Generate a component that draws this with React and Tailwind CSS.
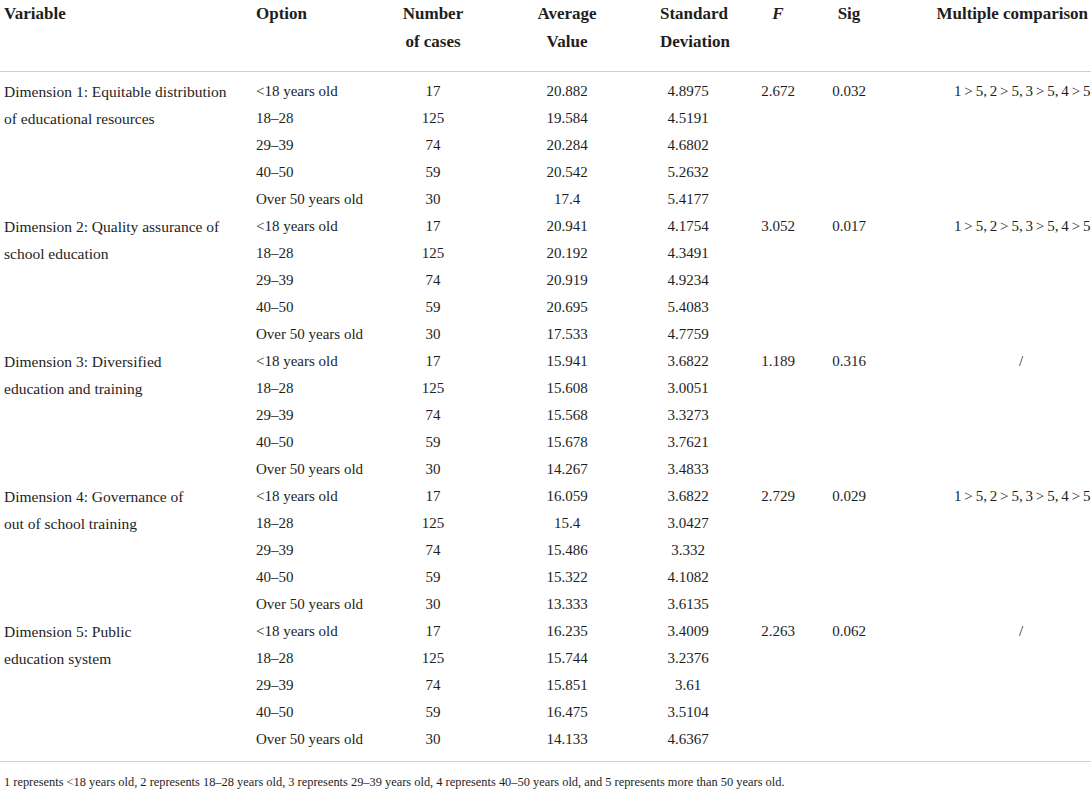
const groups = [
  {
    name: ['Dimension 1: Equitable distribution', 'of educational resources'],
    f: '2.672',
    sig: '0.032',
    mc: '1 > 5, 2 > 5, 3 > 5, 4 > 5',
    rows: [
      ['17', '20.882', '4.8975'],
      ['125', '19.584', '4.5191'],
      ['74', '20.284', '4.6802'],
      ['59', '20.542', '5.2632'],
      ['30', '17.4', '5.4177'],
    ],
  },
  {
    name: ['Dimension 2: Quality assurance of', 'school education'],
    f: '3.052',
    sig: '0.017',
    mc: '1 > 5, 2 > 5, 3 > 5, 4 > 5',
    rows: [
      ['17', '20.941', '4.1754'],
      ['125', '20.192', '4.3491'],
      ['74', '20.919', '4.9234'],
      ['59', '20.695', '5.4083'],
      ['30', '17.533', '4.7759'],
    ],
  },
  {
    name: ['Dimension 3: Diversified', 'education and training'],
    f: '1.189',
    sig: '0.316',
    mc: '/',
    rows: [
      ['17', '15.941', '3.6822'],
      ['125', '15.608', '3.0051'],
      ['74', '15.568', '3.3273'],
      ['59', '15.678', '3.7621'],
      ['30', '14.267', '3.4833'],
    ],
  },
  {
    name: ['Dimension 4: Governance of', 'out of school training'],
    f: '2.729',
    sig: '0.029',
    mc: '1 > 5, 2 > 5, 3 > 5, 4 > 5',
    rows: [
      ['17', '16.059', '3.6822'],
      ['125', '15.4', '3.0427'],
      ['74', '15.486', '3.332'],
      ['59', '15.322', '4.1082'],
      ['30', '13.333', '3.6135'],
    ],
  },
  {
    name: ['Dimension 5: Public', 'education system'],
    f: '2.263',
    sig: '0.062',
    mc: '/',
    rows: [
      ['17', '16.235', '3.4009'],
      ['125', '15.744', '3.2376'],
      ['74', '15.851', '3.61'],
      ['59', '16.475', '3.5104'],
      ['30', '14.133', '4.6367'],
    ],
  },
];

const options = ['<18 years old', '18–28', '29–39', '40–50', 'Over 50 years old'];

export default function App() {
  return (
    <div className="min-h-screen w-[1091px] bg-white font-['Liberation_Serif',serif] text-[#1e1e1e]">
      <table className="w-[1091px] table-fixed border-collapse">
        <colgroup>
          <col className="w-[252px]" />
          <col className="w-[114px]" />
          <col className="w-[134px]" />
          <col className="w-[134px]" />
          <col className="w-[108px]" />
          <col className="w-[72px]" />
          <col className="w-[70px]" />
          <col className="w-[207px]" />
        </colgroup>
        <thead>
          <tr className="border-b border-[#d0d0d0] align-top text-[17px] leading-[28px] [&>th]:pb-[15px] [&>th]:font-bold">
            <th className="pl-1 text-left">Variable</th>
            <th className="pl-1 text-left">Option</th>
            <th className="text-center">
              Number
              <br />
              of cases
            </th>
            <th className="text-center">
              Average
              <br />
              Value
            </th>
            <th className="pl-[26px] text-left whitespace-nowrap">
              Standard
              <br />
              Deviation
            </th>
            <th className="text-center italic">F</th>
            <th className="text-center">Sig</th>
            <th className="pr-[3px] text-right whitespace-nowrap">Multiple comparison</th>
          </tr>
        </thead>
        <tbody className="border-b border-[#d0d0d0] text-[15px] leading-[27px]">
          {groups.map((g, gi) =>
            g.rows.map((r, ri) => {
              const first = ri === 0;
              const pad = gi === 0 && first ? 'pt-[6px]' : gi === groups.length - 1 && ri === 4 ? 'pb-[8px]' : '';
              return (
                <tr key={gi + '-' + ri}>
                  {first && (
                    <td rowSpan={5} className={`pl-1 align-top text-[15.5px] ${gi === 0 ? 'pt-[6px]' : ''}`}>
                      {g.name[0]}
                      <br />
                      {g.name[1]}
                    </td>
                  )}
                  <td className={`pl-1 whitespace-nowrap ${pad}`}>{options[ri]}</td>
                  <td className={`text-center ${pad}`}>{r[0]}</td>
                  <td className={`text-center ${pad}`}>{r[1]}</td>
                  <td className={`text-center ${pad}`}>{r[2]}</td>
                  <td className={`text-center ${pad}`}>{first ? g.f : ''}</td>
                  <td className={`text-center ${pad}`}>{first ? g.sig : ''}</td>
                  <td className={`pr-[3px] text-right whitespace-nowrap ${pad}`}>
                    {first && (
                      <span className="inline-block w-[134px] text-center [word-spacing:-0.9px]">{g.mc}</span>
                    )}
                  </td>
                </tr>
              );
            })
          )}
        </tbody>
      </table>
      <p className="pt-[10px] pl-1 text-[12.4px] leading-[20px]">
        1 represents &lt;18 years old, 2 represents 18–28 years old, 3 represents 29–39 years old, 4 represents 40–50 years old, and 5 represents more than 50 years old.
      </p>
    </div>
  );
}
